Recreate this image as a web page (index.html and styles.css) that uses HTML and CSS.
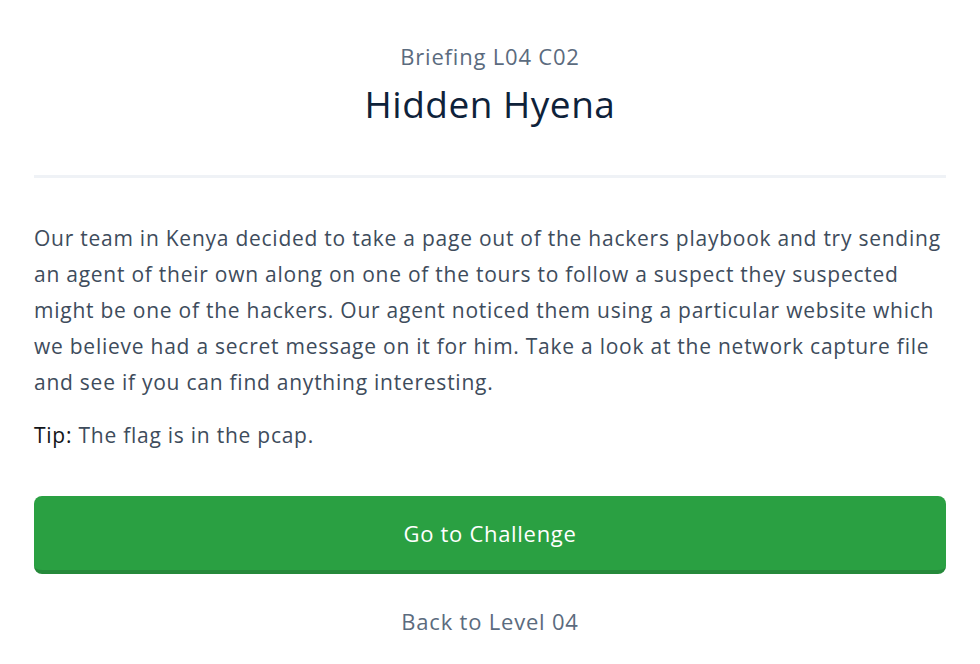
FILE: index.html
```html
<!DOCTYPE html>
<html lang="en">
<head>
<meta charset="utf-8">
<title>Hidden Hyena</title>
<link rel="stylesheet" href="styles.css">
</head>
<body>
<main class="page">
  <header class="head">
    <div class="kicker">Briefing L04 C02</div>
    <h1 class="title">Hidden Hyena</h1>
  </header>
  <hr class="rule">
  <section class="brief">
    <p class="text">Our team in Kenya decided to take a page out of the hackers playbook and try sending an agent of their own along on one of the tours to follow a suspect they suspected might be one of the hackers. Our agent noticed them using a particular website which we believe had a secret message on it for him. Take a look at the network capture file and see if you can find anything interesting.</p>
    <p class="text tip"><strong class="tip-label">Tip:</strong> The flag is in the pcap.</p>
  </section>
  <a class="btn" href="#">Go to Challenge</a>
  <a class="back" href="#">Back to Level 04</a>
</main>
</body>
</html>
```

FILE: styles.css
```css
html, body {
  margin: 0;
  padding: 0;
  background: #ffffff;
}
body {
  font-family: "Open Sans", "Noto Sans", "Liberation Sans", sans-serif;
  color: #3e4c5c;
}
.page {
  padding: 40px 34px 0;
  display: flex;
  flex-direction: column;
}
.head {
  text-align: center;
}
.kicker {
  font-size: 22px;
  line-height: 32px;
  letter-spacing: 0.8px;
  color: #5b6b7e;
}
.title {
  margin: 10px 0 0;
  font-size: 37px;
  line-height: 44px;
  letter-spacing: 0.5px;
  font-weight: 500;
  color: #0e223a;
}
.rule {
  margin: 49px 0 0;
  border: 0;
  height: 3px;
  background: #eff2f6;
}
.brief {
  margin-top: 42px;
}
.text {
  margin: 0;
  font-size: 21px;
  line-height: 36px;
  letter-spacing: 0.75px;
  color: #3e4c5c;
}
.tip {
  margin-top: 17px;
}
.tip-label {
  font-weight: 400;
  color: #111418;
}
.btn {
  margin-top: 43px;
  display: block;
  height: 74px;
  line-height: 74px;
  border-bottom: 4px solid #25893a;
  border-radius: 8px;
  background: #2aa042;
  color: #ffffff;
  text-align: center;
  font-size: 22px;
  letter-spacing: 0.7px;
  font-weight: 500;
  text-decoration: none;
}
.back {
  margin-top: 31px;
  align-self: center;
  font-size: 22px;
  line-height: 32px;
  letter-spacing: 0.8px;
  color: #5b6b7e;
  text-decoration: none;
}
```
